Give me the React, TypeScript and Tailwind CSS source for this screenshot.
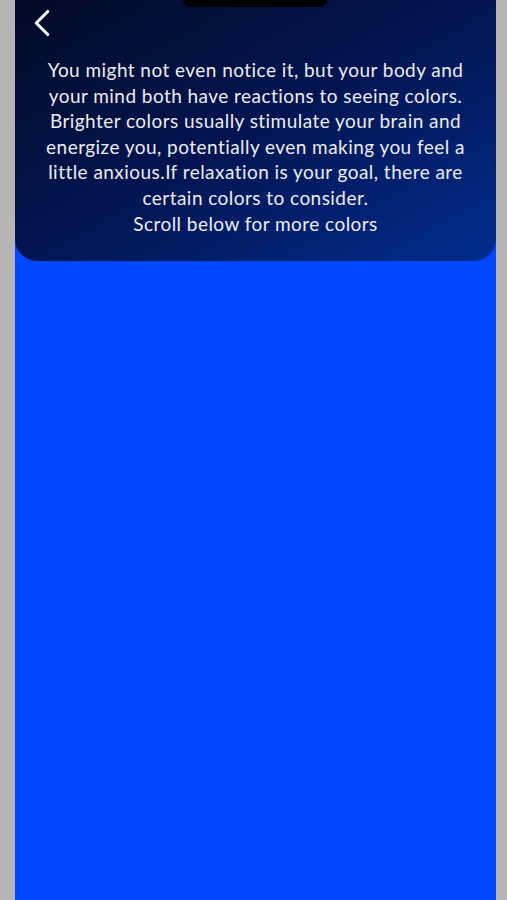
import { ChevronLeft } from "lucide-react";

const lines = [
  "You might not even notice it, but your body and",
  "your mind both have reactions to seeing colors.",
  "Brighter colors usually stimulate your brain and",
  "energize you, potentially even making you feel a",
  "little anxious.If relaxation is your goal, there are",
  "certain colors to consider.",
  "Scroll below for more colors",
];

export default function App() {
  return (
    <div className="h-[900px] w-full bg-[#b6b5b3] flex justify-center overflow-hidden">
      <div className="w-[481px] h-full bg-[#0048ff] ml-[4px] flex flex-col">
        {/* Header card */}
        <div className="relative h-[261px] rounded-b-[22px] bg-gradient-to-br from-[#020a26] via-[#021552] to-[#012d8f] flex flex-col">
          {/* Notch */}
          <div className="absolute top-0 left-[168px] w-[144px] h-[7px] bg-black rounded-b-[10px]" />

          <button className="ml-[4px] w-[46px] h-[46px] flex items-center justify-center text-white">
            <ChevronLeft className="w-[46px] h-[46px]" strokeWidth={1.6} />
          </button>

          <p
            className="mt-[11px] text-center text-[19px] leading-[25.6px] text-[#ececf2] tracking-[0.45px]"
            style={{ fontFamily: "Lato, 'Open Sans', sans-serif" }}
          >
            {lines.map((l, i) => (
              <span key={i} className="block whitespace-nowrap">
                {l}
              </span>
            ))}
          </p>
        </div>
      </div>
    </div>
  );
}
